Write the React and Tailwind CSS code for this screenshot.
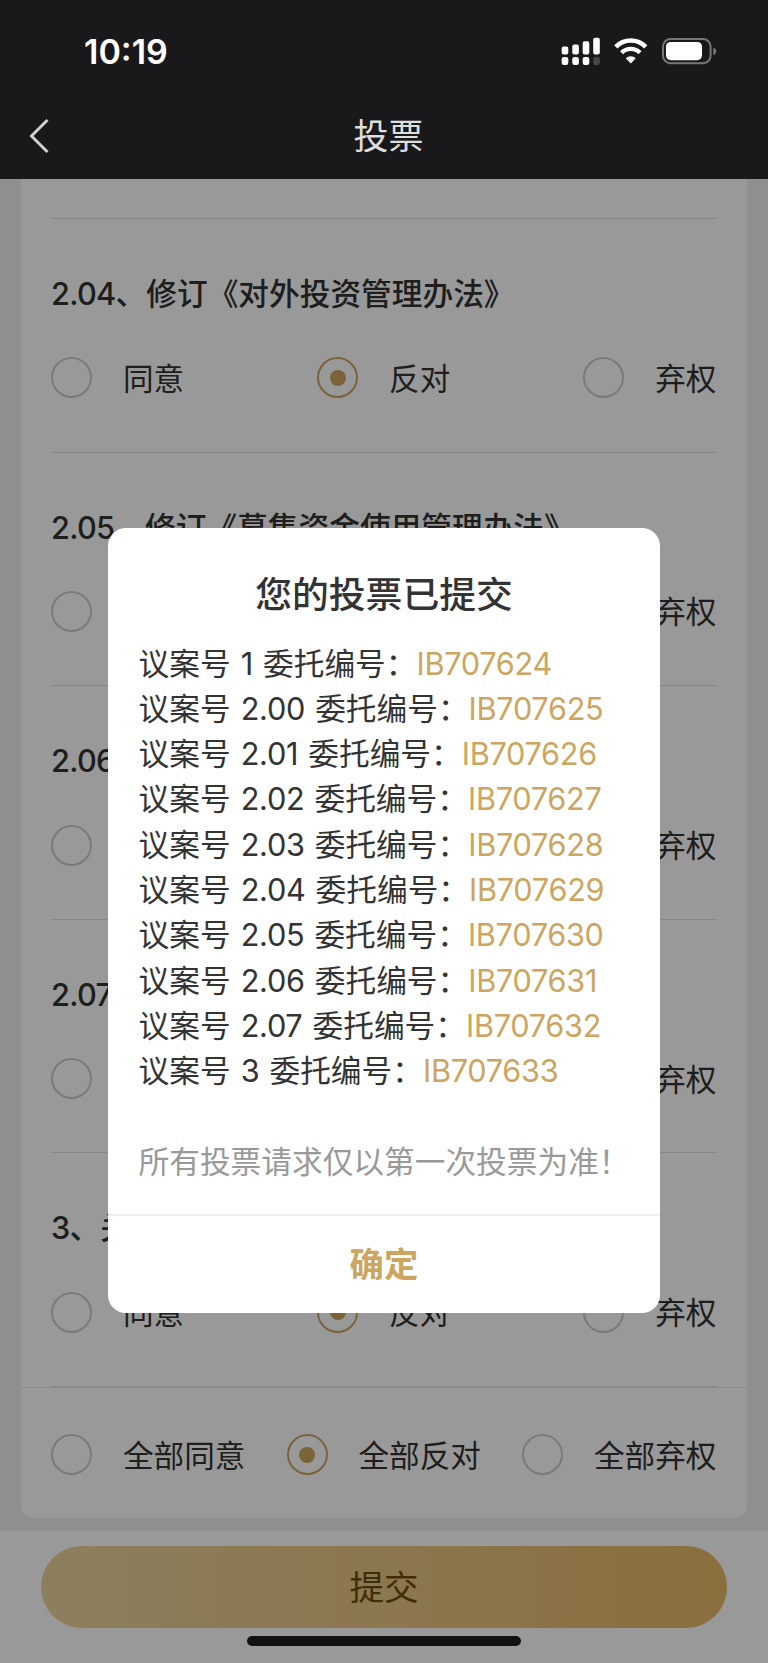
import { useState } from 'react';

const proposals = [
  { no: '2.04', title: '修订《对外投资管理办法》' },
  { no: '2.05', title: '修订《募集资金使用管理办法》' },
  { no: '2.06', title: '修订《关联交易管理办法》' },
  { no: '2.07', title: '修订《对外担保管理办法》' },
  { no: '3', title: '关于选举监事的议案' },
];

const receipts = [
  { no: '1', code: 'IB707624' },
  { no: '2.00', code: 'IB707625' },
  { no: '2.01', code: 'IB707626' },
  { no: '2.02', code: 'IB707627' },
  { no: '2.03', code: 'IB707628' },
  { no: '2.04', code: 'IB707629' },
  { no: '2.05', code: 'IB707630' },
  { no: '2.06', code: 'IB707631' },
  { no: '2.07', code: 'IB707632' },
  { no: '3', code: 'IB707633' },
];

const options = ['同意', '反对', '弃权'];

function StatusBar() {
  return (
    <div className="flex h-[102px] items-center justify-between pl-[84px] pr-[51px]">
      <span className="pt-px font-['Inter'] text-[34px] font-semibold leading-none text-white">10:19</span>
      <svg width="156" height="30" viewBox="0 0 156 30" fill="none">
        <g fill="#fff">
          <rect x="0.7" y="10.5" width="6.6" height="8" rx="2" />
          <rect x="11.3" y="8.4" width="6.6" height="10.1" rx="2" />
          <rect x="21.7" y="5.3" width="6.6" height="13.2" rx="2" />
          <rect x="32.2" y="1.8" width="6.6" height="16.7" rx="2" />
          <rect x="0.7" y="21" width="6.6" height="8" rx="2.2" />
          <rect x="11.3" y="21" width="6.6" height="8" rx="2.2" />
          <rect x="21.7" y="21" width="6.6" height="8" rx="2.2" />
          <rect x="32.2" y="21" width="6.6" height="8" rx="2.2" fill="#48484a" />
        </g>
        {/* wifi */}
        <path d="M54.8 10.8 A21 21 0 0 1 84.8 10.8" stroke="#fff" strokeWidth="4.6" />
        <path d="M60.6 16.8 A12.8 12.8 0 0 1 79 16.8" stroke="#fff" strokeWidth="4.2" />
        <path d="M64.8 22.2 A7.3 7.3 0 0 1 74.8 22.2 L69.8 27.6 Z" fill="#fff" />
        {/* battery */}
        <rect x="102" y="3" width="47.6" height="24.2" rx="7.5" stroke="#77777a" strokeWidth="2" />
        <rect x="105" y="6" width="36" height="18.2" rx="4.6" fill="#fff" />
        <path d="M152.4 11.4 Q155.2 12.4 155.2 15.3 Q155.2 18.2 152.4 19.2 Z" fill="#77777a" />
      </svg>
    </div>
  );
}

function Radio({ label, checked, onSelect }) {
  return (
    <button type="button" onClick={onSelect} className="flex h-[41px] items-center gap-[31px]">
      <span
        className={`flex size-[41px] items-center justify-center rounded-full border-2 ${
          checked ? 'border-[#cca660]' : 'border-[#cccccc]'
        }`}
      >
        {checked && <span className="size-[16px] rounded-full bg-[#cca660]" />}
      </span>
      <span className="whitespace-nowrap pt-px text-[30.6px] leading-[41px]">{label}</span>
    </button>
  );
}

function RadioRow({ prefix = '', value, onChange }) {
  return (
    <div className="mr-[0.6px] flex justify-between">
      {options.map((name, i) => (
        <Radio key={name} label={prefix + name} checked={value === i} onSelect={() => onChange(i)} />
      ))}
    </div>
  );
}

function Proposal({ no, title }) {
  const [value, setValue] = useState(1);

  return (
    <div className="mx-[30px] h-[233.6px] border-b border-[#e2e2e2] pt-[53px]">
      <h3 className="mb-[42.4px] h-[43px] whitespace-nowrap text-[30.7px] font-medium leading-[43px]">
        <span className="tracking-[-0.7px]">{no}</span>、{title}
      </h3>
      <RadioRow value={value} onChange={setValue} />
    </div>
  );
}

function ResultDialog({ onClose }) {
  return (
    <div className="flex h-[785px] w-[552px] flex-col overflow-hidden rounded-[18px] bg-white">
      <h2 className="mt-[41px] text-center text-[36.8px] font-medium leading-[52px]">您的投票已提交</h2>
      <div className="mt-[19.5px] px-[30.5px] text-[30.7px] leading-[45.3px]">
        {receipts.map((r) => (
          <p key={r.no} className="whitespace-nowrap [word-spacing:1.5px]">
            议案号 <span className="tracking-[-0.3px]">{r.no}</span> 委托编号：
            <span className="tracking-[-0.3px] text-[#cca660]">{r.code}</span>
          </p>
        ))}
        <p className="mt-[45.3px] whitespace-nowrap text-[#999]">所有投票请求仅以第一次投票为准！</p>
      </div>
      <button
        type="button"
        onClick={onClose}
        className="mt-auto h-[99px] border-t-2 border-[#f0f0f0] text-[34.4px] font-bold text-[#cca660]"
      >
        确定
      </button>
    </div>
  );
}

export default function App() {
  const [all, setAll] = useState(1);
  const [open, setOpen] = useState(true);

  return (
    <div className="flex h-[1663px] w-[768px] flex-col overflow-hidden bg-[#eeeff3] font-['Inter','Noto_Sans_CJK_SC',sans-serif] text-[#333]">
      <header className="h-[179px] shrink-0 bg-[#19191b]">
        <StatusBar />
        <div className="grid h-[68px] grid-cols-3 items-center">
          <svg className="ml-[27px]" width="24" height="36" viewBox="0 0 24 36" fill="none">
            <path d="M20.5 2 L4.5 18 L20.5 34" stroke="#d0d0d0" strokeWidth="3" />
          </svg>
          <h1 className="pl-[9px] text-center text-[35px] leading-[50px] text-[#dedede]">投票</h1>
        </div>
      </header>

      <div className="relative flex grow flex-col">
        <main className="mx-[21px] rounded-b-[13px] bg-white">
          <div className="mx-[30px] h-[40px] border-b border-[#e2e2e2]" />
          {proposals.map((p) => (
            <Proposal key={p.no} {...p} />
          ))}
          <div className="h-[131px] border-t border-[#e8e8e8] px-[30px] pt-[46.4px]">
            <RadioRow prefix="全部" value={all} onChange={setAll} />
          </div>
        </main>

        <footer className="mt-auto h-[132px] bg-white px-[41px] pt-[15px]">
          <button
            type="button"
            className="h-[82px] w-full rounded-full bg-linear-to-r from-[#ebd39c] to-[#e6b968] pt-[2px] text-[34.6px] text-[#6b4d10]"
          >
            提交
          </button>
        </footer>

        {open && (
          <div className="absolute inset-0 flex items-start justify-center bg-black/40 pt-[349px]">
            <ResultDialog onClose={() => setOpen(false)} />
          </div>
        )}
        {/* home indicator */}
        <div className="absolute bottom-[17px] left-[247px] h-[10px] w-[274px] rounded-full bg-[#121212]" />
      </div>
    </div>
  );
}
